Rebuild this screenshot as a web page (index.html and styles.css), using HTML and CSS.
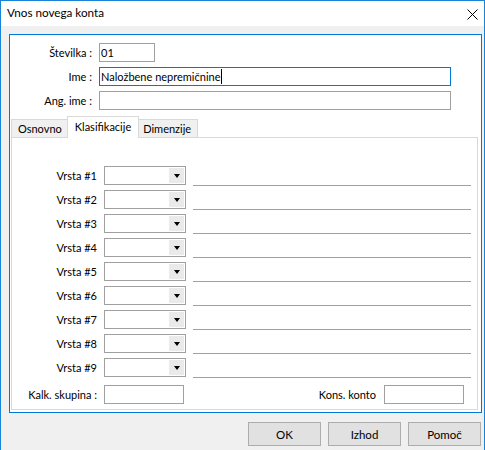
FILE: index.html
```html
<!DOCTYPE html>
<html lang="sl">
<head>
<meta charset="utf-8">
<title>Vnos novega konta</title>
<link rel="stylesheet" href="styles.css">
</head>
<body>
<div class="window">
  <div class="titlebar">
    <span class="title">Vnos novega konta</span>
    <svg class="close" width="11" height="11" viewBox="0 0 11 11"><path d="M0.5 0.5 L10.5 10.5 M10.5 0.5 L0.5 10.5" stroke="#000" stroke-width="1" fill="none"/></svg>
  </div>
  <div class="client">
    <div class="frame">
      <div class="fields">
        <label class="lbl">Številka :</label>
        <div class="edit short">01</div>
        <label class="lbl">Ime :</label>
        <div class="edit wide focus">Naložbene nepremičnine<span class="caret"></span></div>
        <label class="lbl">Ang. ime :</label>
        <div class="edit wide"></div>
      </div>
      <div class="tabs">
        <div class="tab">Osnovno</div>
        <div class="tab active">Klasifikacije</div>
        <div class="tab">Dimenzije</div>
      </div>
      <div class="panel">
        <div class="grid">
          <label class="lbl2">Vrsta #1</label><div class="combo"><span class="btn"><i class="arrow"></i></span></div><div class="rule"></div>
          <label class="lbl2">Vrsta #2</label><div class="combo"><span class="btn"><i class="arrow"></i></span></div><div class="rule"></div>
          <label class="lbl2">Vrsta #3</label><div class="combo"><span class="btn"><i class="arrow"></i></span></div><div class="rule"></div>
          <label class="lbl2">Vrsta #4</label><div class="combo"><span class="btn"><i class="arrow"></i></span></div><div class="rule"></div>
          <label class="lbl2">Vrsta #5</label><div class="combo"><span class="btn"><i class="arrow"></i></span></div><div class="rule"></div>
          <label class="lbl2">Vrsta #6</label><div class="combo"><span class="btn"><i class="arrow"></i></span></div><div class="rule"></div>
          <label class="lbl2">Vrsta #7</label><div class="combo"><span class="btn"><i class="arrow"></i></span></div><div class="rule"></div>
          <label class="lbl2">Vrsta #8</label><div class="combo"><span class="btn"><i class="arrow"></i></span></div><div class="rule"></div>
          <label class="lbl2">Vrsta #9</label><div class="combo"><span class="btn"><i class="arrow"></i></span></div><div class="rule"></div>
          <label class="lbl2">Kalk. skupina :</label>
          <div class="lastrow">
            <div class="edit small"></div>
            <label class="kons">Kons. konto</label>
            <div class="edit small"></div>
          </div>
        </div>
      </div>
    </div>
    <div class="buttons">
      <button class="pb">OK</button>
      <button class="pb">Izhod</button>
      <button class="pb">Pomoč</button>
    </div>
  </div>
</div>
</body>
</html>
```

FILE: styles.css
```css
html, body {
  margin: 0;
  padding: 0;
}

body {
  width: 485px;
  height: 450px;
  overflow: hidden;
  background: #f0f0f0;
  font-family: Lato, "Open Sans", sans-serif;
  font-size: 11px;
  color: #000;
}

.window {
  box-sizing: border-box;
  width: 485px;
  height: 450px;
  border: 1px solid #1883d7;
  border-bottom: none;
  display: flex;
  flex-direction: column;
}

.titlebar {
  height: 25px;
  background: #fff;
  display: flex;
  align-items: center;
  justify-content: space-between;
  padding: 0 6px 0 6px;
  flex: none;
}

.title {
  font-size: 11.7px;
  line-height: 16px;
  margin-top: -3px;
}

.close {
  margin-top: 2px;
}

.client {
  flex: 1;
  background: #f0f0f0;
  padding: 8px 2px 0 8px;
}

.frame {
  box-sizing: border-box;
  height: 379px;
  border: 1px solid #0078d7;
  background: #fff;
  padding: 0 3px 2px 1px;
  display: flex;
  flex-direction: column;
}

.fields {
  display: grid;
  grid-template-columns: 80px auto;
  column-gap: 7px;
  row-gap: 5px;
  padding-top: 8px;
  padding-left: 1px;
  align-items: center;
}

.lbl, .lbl2 {
  text-align: right;
  white-space: nowrap;
  line-height: 19px;
}

.edit {
  box-sizing: border-box;
  height: 19px;
  border: 1px solid #a0a0a0;
  background: #fff;
  padding: 0 1px;
  line-height: 17px;
  white-space: nowrap;
}

.edit.short { width: 56px; }
.edit.wide { width: 352px; }
.edit.small { width: 80px; }

.edit.focus {
  border-color: #0078d7;
}

.caret {
  display: inline-block;
  width: 1px;
  height: 15px;
  background: #000;
  vertical-align: -3px;
}

/* tab strip: the selected tab grows 2px on each side over its neighbours */
.tabs {
  display: flex;
  align-items: flex-end;
  margin-top: 6px;
  height: 21px;
  position: relative;
  z-index: 1;
}

.tab {
  box-sizing: border-box;
  height: 18px;
  border: 1px solid #d9d9d9;
  border-bottom: none;
  background: #f0f0f0;
  line-height: 17px;
  padding: 0 6px;
  white-space: nowrap;
}

.tab + .tab { margin-left: -1px; }

.tab.active {
  position: relative;
  z-index: 2;
  height: 22px;
  background: #fff;
  padding: 0 7px;
  margin: 0 -2px -1px -2px;
  line-height: 19px;
}

.panel {
  flex: 1;
  border: 1px solid #d9d9d9;
  padding-top: 28px;
}

.grid {
  display: grid;
  grid-template-columns: 85px 82px 278px;
  column-gap: 7px;
  row-gap: 5px;
  align-items: end;
}

.combo {
  box-sizing: border-box;
  height: 19px;
  border: 1px solid #a0a0a0;
  background: #fff;
  display: flex;
  justify-content: flex-end;
  padding: 1px;
}

.btn {
  width: 15px;
  background: #eaeaea;
  display: flex;
  align-items: center;
  justify-content: center;
}

.arrow {
  width: 0;
  height: 0;
  border-left: 3.5px solid transparent;
  border-right: 3.5px solid transparent;
  border-top: 4px solid #000;
  margin-top: 1px;
}

.rule {
  height: 19px;
  border-bottom: 1px solid #a0a0a0;
  box-sizing: border-box;
  margin-bottom: -1px;
}

.lastrow {
  grid-column: 2 / 4;
  display: flex;
  align-items: center;
  margin-top: 3px;
}

.lastrow .kons {
  margin-left: auto;
  margin-right: 8px;
  line-height: 19px;
}

.lastrow .edit:last-child {
  margin-right: 7px;
}

.buttons {
  display: flex;
  justify-content: flex-end;
  gap: 7px;
  padding-top: 9px;
  padding-right: 1px;
}

.pb {
  box-sizing: border-box;
  width: 73px;
  height: 24px;
  border: 1px solid #adadad;
  background: #e1e1e1;
  font-family: inherit;
  font-size: 11.5px;
  color: #000;
  padding: 0;
  margin: 0;
}
```
